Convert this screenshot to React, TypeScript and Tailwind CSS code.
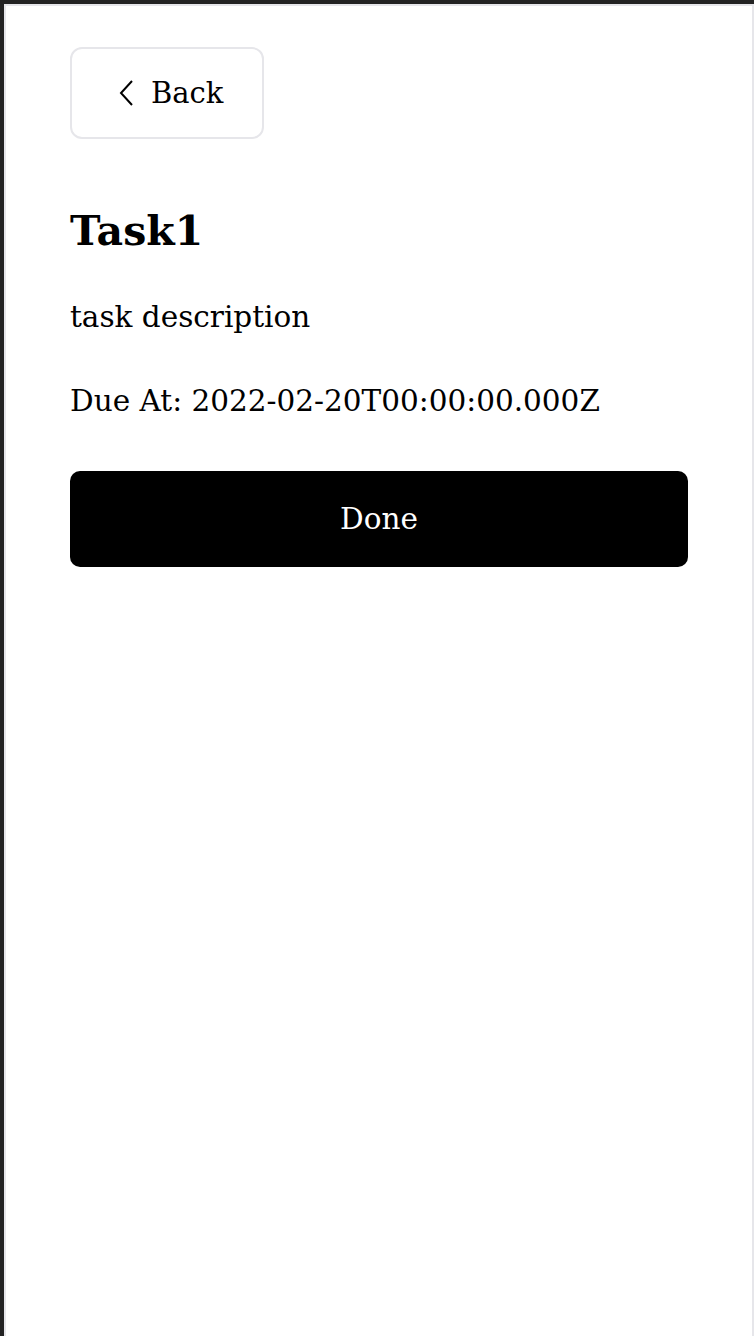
export default function App() {
  return (
    <div className="min-h-[1336px] bg-[#232323] pt-[4px] pl-[4px]">
      <div
        className="min-h-[1332px] bg-white border-t-2 border-l-2 border-r-2 border-[#e6e6ea] px-[64px] pt-[41px]"
        style={{ fontFamily: '"DejaVu Serif", "Liberation Serif", serif' }}
      >
        <button className="flex h-[92px] w-[194px] items-center rounded-[12px] border-2 border-[#e6e6ea] bg-white pl-[46px] text-[29px] text-black">
          <svg width="16" height="28" viewBox="0 0 16 28" fill="none" className="mr-[17px]">
            <path d="M14 2 L3 14 L14 26" stroke="black" strokeWidth="2" />
          </svg>
          <span className="pt-[2px]">Back</span>
        </button>
        <h1 className="mt-[64px] text-[41px] font-bold leading-[56px] text-black">Task1</h1>
        <p className="mt-[38px] text-[29.5px] leading-[40px] text-black">task description</p>
        <p className="mt-[44px] text-[29.5px] leading-[40px] text-black">Due At: 2022-02-20T00:00:00.000Z</p>
        <button className="mt-[50px] flex h-[96px] w-full items-center justify-center rounded-[10px] bg-black text-[29.5px] text-white">
          Done
        </button>
      </div>
    </div>
  );
}
